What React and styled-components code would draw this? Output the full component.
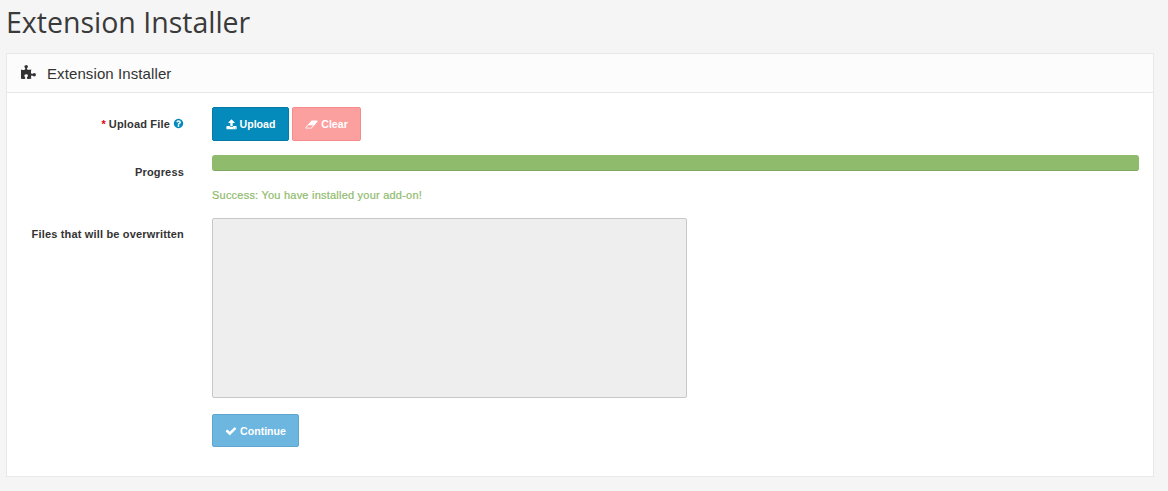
import styled, { createGlobalStyle } from "styled-components";

const Global = createGlobalStyle`
  html, body { margin: 0; padding: 0; background: #f5f5f5; }
  body { font-family: "Liberation Sans", Arial, sans-serif; font-size: 12px; color: #333; }
`;

// Font Awesome 4 glyphs, the set the original page uses
const paths = {
  puzzle:
    "M1664 1098q0 81-44.5 135t-123.5 54q-41 0-77.5-17.5t-59-38-56.5-38-71-17.5q-110 0-110 124 0 39 16 115t15 115v5q-22 0-33 1-34 3-97.5 11.5t-115.5 13.5-98 5q-61 0-103-26.5t-42-83.5q0-37 17.5-71t38-56.5 38-59 17.5-77.5q0-79-54-123.5t-135-44.5q-84 0-143 45.5t-59 127.5q0 43 15 83t33.5 64.5 33.5 53 15 50.5q0 45-46 89-37 35-117 35-95 0-245-24-9-2-27.5-4t-27.5-4l-13-2q-1 0-3-1-2 0-2-1v-1024q2 1 17.5 3.5t34 5 21.5 3.5q150 24 245 24 80 0 117-35 46-44 46-89 0-22-15-50.5t-33.5-53-33.5-64.5-15-83q0-82 59-127.5t144-45.5q80 0 134 44.5t54 123.5q0 41-17.5 77.5t-38 59-38 56.5-17.5 71q0 57 42 83.5t103 26.5q64 0 180-15t163-17v2q-1 2-3.5 17.5t-5 34-3.5 21.5q-24 150-24 245 0 80 35 117 44 46 89 46 22 0 50.5-15t53-33.5 64.5-33.5 83-15q82 0 127.5 59t45.5 143z",
  upload:
    "M1344 1472q0-26-19-45t-45-19-45 19-19 45 19 45 45 19 45-19 19-45zm256 0q0-26-19-45t-45-19-45 19-19 45 19 45 45 19 45-19 19-45zm128-224v320q0 40-28 68t-68 28h-1472q-40 0-68-28t-28-68v-320q0-40 28-68t68-28h427q21 56 70.5 92t110.5 36h256q61 0 110.5-36t70.5-92h427q40 0 68 28t28 68zm-325-648q-17 40-59 40h-256v448q0 26-19 45t-45 19h-256q-26 0-45-19t-19-45v-448h-256q-42 0-59-40-17-39 14-69l448-448q18-19 45-19t45 19l448 448q31 30 14 69z",
  eraser:
    "M960 1408l336-384h-768l-336 384h768zm1013-1077q15 34 9.5 71.5t-30.5 65.5l-896 1024q-38 44-96 44h-768q-38 0-69.5-20.5t-47.5-54.5q-15-34-9.5-71.5t30.5-65.5l896-1024q38-44 96-44h768q38 0 69.5 20.5t47.5 54.5z",
  check:
    "M1671 566q0 40-28 68l-724 724-136 136q-28 28-68 28t-68-28l-136-136-362-362q-28-28-28-68t28-68l136-136q28-28 68-28t68 28l294 295 656-657q28-28 68-28t68 28l136 136q28 28 28 68z",
  question:
    "M1024 1376v-192q0-14-9-23t-23-9h-192q-14 0-23 9t-9 23v192q0 14 9 23t23 9h192q14 0 23-9t9-23zm256-672q0-88-55.5-163t-138.5-116-170-41q-243 0-371 213-15 24 8 42l132 100q7 6 19 6 16 0 25-12 53-68 86-92 34-24 86-24 48 0 85.5 26t37.5 59q0 38-20 61t-68 45q-63 28-115.5 86.5t-52.5 125.5v36q0 14 9 23t23 9h192q14 0 23-9t9-23q0-19 21.5-49.5t54.5-49.5q32-18 49-28.5t46-35 44.5-48 28-60.5 12.5-81zm384 192q0 209-103 385.5t-279.5 279.5-385.5 103-385.5-103-279.5-279.5-103-385.5 103-385.5 279.5-279.5 385.5-103 385.5 103 279.5 279.5 103 385.5z",
};

function Icon({ name, size, wide }) {
  return (
    <svg width={size} height={size} viewBox={wide ? "0 0 2048 1792" : "0 0 1792 1792"} fill="currentColor">
      <path d={paths[name]} />
    </svg>
  );
}

const Page = styled.div`
  width: 1168px;
  height: 491px;
  overflow: hidden;
  padding: 0 14px 0 6px;
  box-sizing: border-box;
`;

const Title = styled.h1`
  margin: 0;
  height: 53px;
  padding: 4px 0 0 0;
  box-sizing: border-box;
  font-family: "Open Sans", sans-serif;
  font-size: 28.5px;
  line-height: 37px;
  font-weight: 400;
  color: #3a3a3a;
`;

const Panel = styled.section`
  background: #fff;
  border: 1px solid #e8e8e8;
  height: 424px;
  box-sizing: border-box;
`;

const PanelHead = styled.header`
  height: 39px;
  box-sizing: border-box;
  background: #fcfcfc;
  border-bottom: 1px solid #e8e8e8;
  display: flex;
  align-items: center;
  padding: 0 0 0 14px;
  gap: 10px;
  font-size: 15px;
  letter-spacing: 0.1px;
  color: #333;
`;

const Form = styled.div`
  display: grid;
  grid-template-columns: 177px 927px;
  column-gap: 28px;
  padding: 14px 0 0 0;
`;

const Label = styled.label`
  font-size: 11px;
  font-weight: 700;
  letter-spacing: 0.17px;
  color: #333;
  text-align: right;
  padding-top: ${(p) => p.$top || 0}px;
  line-height: 14px;
`;

const Star = styled.span`
  color: #e3000f;
  margin-right: 3px;
`;

const Help = styled.span`
  color: #048abb;
  margin-left: 3px;
  svg { vertical-align: -1px; }
`;

const Field = styled.div`
  padding-bottom: ${(p) => p.$bottom || 0}px;
`;

const Buttons = styled.div`
  display: flex;
  gap: 3px;
`;

const Button = styled.button`
  height: ${(p) => p.$h || 34}px;
  width: ${(p) => p.$w}px;
  box-sizing: border-box;
  padding: 0;
  display: flex;
  align-items: center;
  justify-content: center;
  gap: 3px;
  border-radius: 2px;
  border: 1px solid ${(p) => p.$border};
  background: ${(p) => p.$bg};
  color: #fff;
  font-family: "Liberation Sans", Arial, sans-serif;
  font-size: 10.6px;
  font-weight: 700;
`;

const Bar = styled.div`
  height: 16px;
  background: #8fbb6c;
  border-bottom: 1px solid #7fa85f;
  border-radius: 3px;
  box-sizing: border-box;
`;

const Success = styled.div`
  margin-top: 18px;
  font-size: 11px;
  line-height: 13px;
  font-weight: 400;
  letter-spacing: 0.22px;
  -webkit-text-stroke: 0.2px #8fbb6c;
  color: #8fbb6c;
`;

const Overwrite = styled.div`
  width: 475px;
  height: 180px;
  box-sizing: border-box;
  background: #eeeeee;
  border: 1px solid #c8c8c8;
  border-radius: 2px;
`;

export default function App() {
  return (
    <Page>
      <Global />
      <Title>Extension Installer</Title>
      <Panel>
        <PanelHead>
          <Icon name="puzzle" size={16} />
          Extension Installer
        </PanelHead>
        <Form>
          <Label $top={10}>
            <Star>*</Star>Upload File
            <Help><Icon name="question" size={11} /></Help>
          </Label>
          <Field $bottom={14}>
            <Buttons>
              <Button $w={77} $bg="#048abb" $border="#037ba6"><Icon name="upload" size={11} />Upload</Button>
              <Button $w={69} $bg="#fb9f9f" $border="#f58b8b"><Icon name="eraser" size={13} wide />Clear</Button>
            </Buttons>
          </Field>
          <Label $top={10}>Progress</Label>
          <Field $bottom={16}>
            <Bar />
            <Success>Success: You have installed your add-on!</Success>
          </Field>
          <Label $top={9}>Files that will be overwritten</Label>
          <Field $bottom={16}>
            <Overwrite />
          </Field>
          <span />
          <Field>
            <Button $w={87} $h={33} $bg="#6cb6e0" $border="#5fa6cf"><Icon name="check" size={12} />Continue</Button>
          </Field>
        </Form>
      </Panel>
    </Page>
  );
}
